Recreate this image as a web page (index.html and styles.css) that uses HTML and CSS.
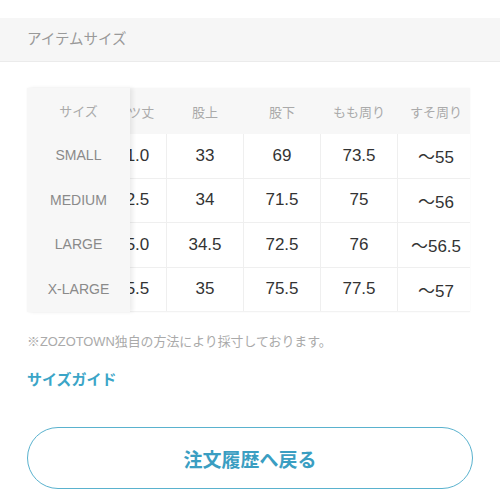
FILE: index.html
```html
<!DOCTYPE html>
<html lang="ja">
<head>
<meta charset="utf-8">
<link rel="stylesheet" href="styles.css">
</head>
<body>
<div class="page">
  <div class="section-head">アイテムサイズ</div>
  <div class="size-table">
    <div class="fixed-col">
      <div class="cell head">サイズ</div>
      <div class="cell label">SMALL</div>
      <div class="cell label">MEDIUM</div>
      <div class="cell label">LARGE</div>
      <div class="cell label">X-LARGE</div>
    </div>
    <div class="scroll-area">
      <table class="values">
        <tr class="head-row"><th>パンツ丈</th><th>股上</th><th>股下</th><th>もも周り</th><th>すそ周り</th></tr>
        <tr><td>101.0</td><td>33</td><td>69</td><td>73.5</td><td>〜55</td></tr>
        <tr><td>102.5</td><td>34</td><td>71.5</td><td>75</td><td>〜56</td></tr>
        <tr><td>105.0</td><td>34.5</td><td>72.5</td><td>76</td><td>〜56.5</td></tr>
        <tr><td>105.5</td><td>35</td><td>75.5</td><td>77.5</td><td>〜57</td></tr>
      </table>
    </div>
  </div>
  <p class="note">※ZOZOTOWN独自の方法により採寸しております。</p>
  <a class="guide-link">サイズガイド</a>
  <div class="btn-wrap">
    <a class="back-btn">注文履歴へ戻る</a>
  </div>
</div>
</body>
</html>
```
FILE: styles.css
```css
html, body {
  margin: 0;
  padding: 0;
  background: #fff;
}
body {
  font-family: "Liberation Sans", "Noto Sans CJK JP", sans-serif;
  color: #333;
}
.page {
  padding-top: 18px;
}
.section-head {
  height: 43px;
  line-height: 43px;
  background: #f6f6f6;
  border-bottom: 1px solid #ebebeb;
  padding: 0 27px;
  font-size: 14.5px;
  color: #999;
}
.size-table {
  margin: 26px 30px 0 27px;
  display: flex;
  box-shadow: 0 0 2px rgba(0,0,0,0.04);
}
.fixed-col {
  width: 103px;
  flex: none;
  background: #f7f7f7;
  position: relative;
  z-index: 2;
  box-shadow: 3px 0 4px rgba(0,0,0,0.07);
}
.fixed-col .cell {
  display: flex;
  align-items: center;
  justify-content: center;
  height: 44.5px;
}
.fixed-col .cell.head {
  height: 45px;
  font-size: 13px;
  color: #aaa;
}
.fixed-col .cell.label {
  font-size: 14px;
  color: #8a8a8a;
}
.scroll-area {
  flex: 1;
  overflow: hidden;
}
.values {
  border-collapse: collapse;
  table-layout: fixed;
  margin-left: -41px;
  width: 381px;
}
.values th, .values td {
  width: 76px;
  text-align: center;
  padding: 0;
  border: 1px solid #efefef;
}
.values th {
  height: 44px;
  background: #f7f7f7;
  font-weight: normal;
  font-size: 13px;
  color: #aaa;
  border-color: #f7f7f7;
}
.values td {
  height: 43.5px;
  font-size: 17px;
  color: #333;
  background: #fff;
}
.values tr:last-child td {
  border-bottom-color: #f2f2f2;
}
.note {
  margin: 20px 27px 0;
  font-size: 12.9px;
  line-height: 20px;
  color: #aaa;
}
.guide-link {
  display: block;
  margin: 18px 27px 0;
  font-size: 15px;
  font-weight: bold;
  color: #3ba5c7;
  line-height: 20px;
}
.btn-wrap {
  padding: 37px 27px 0;
}
.back-btn {
  display: flex;
  align-items: center;
  justify-content: center;
  height: 60px;
  border: 1px solid #5ab2ce;
  border-radius: 31px;
  font-size: 19px;
  font-weight: bold;
  color: #3a9ec2;
}
```
